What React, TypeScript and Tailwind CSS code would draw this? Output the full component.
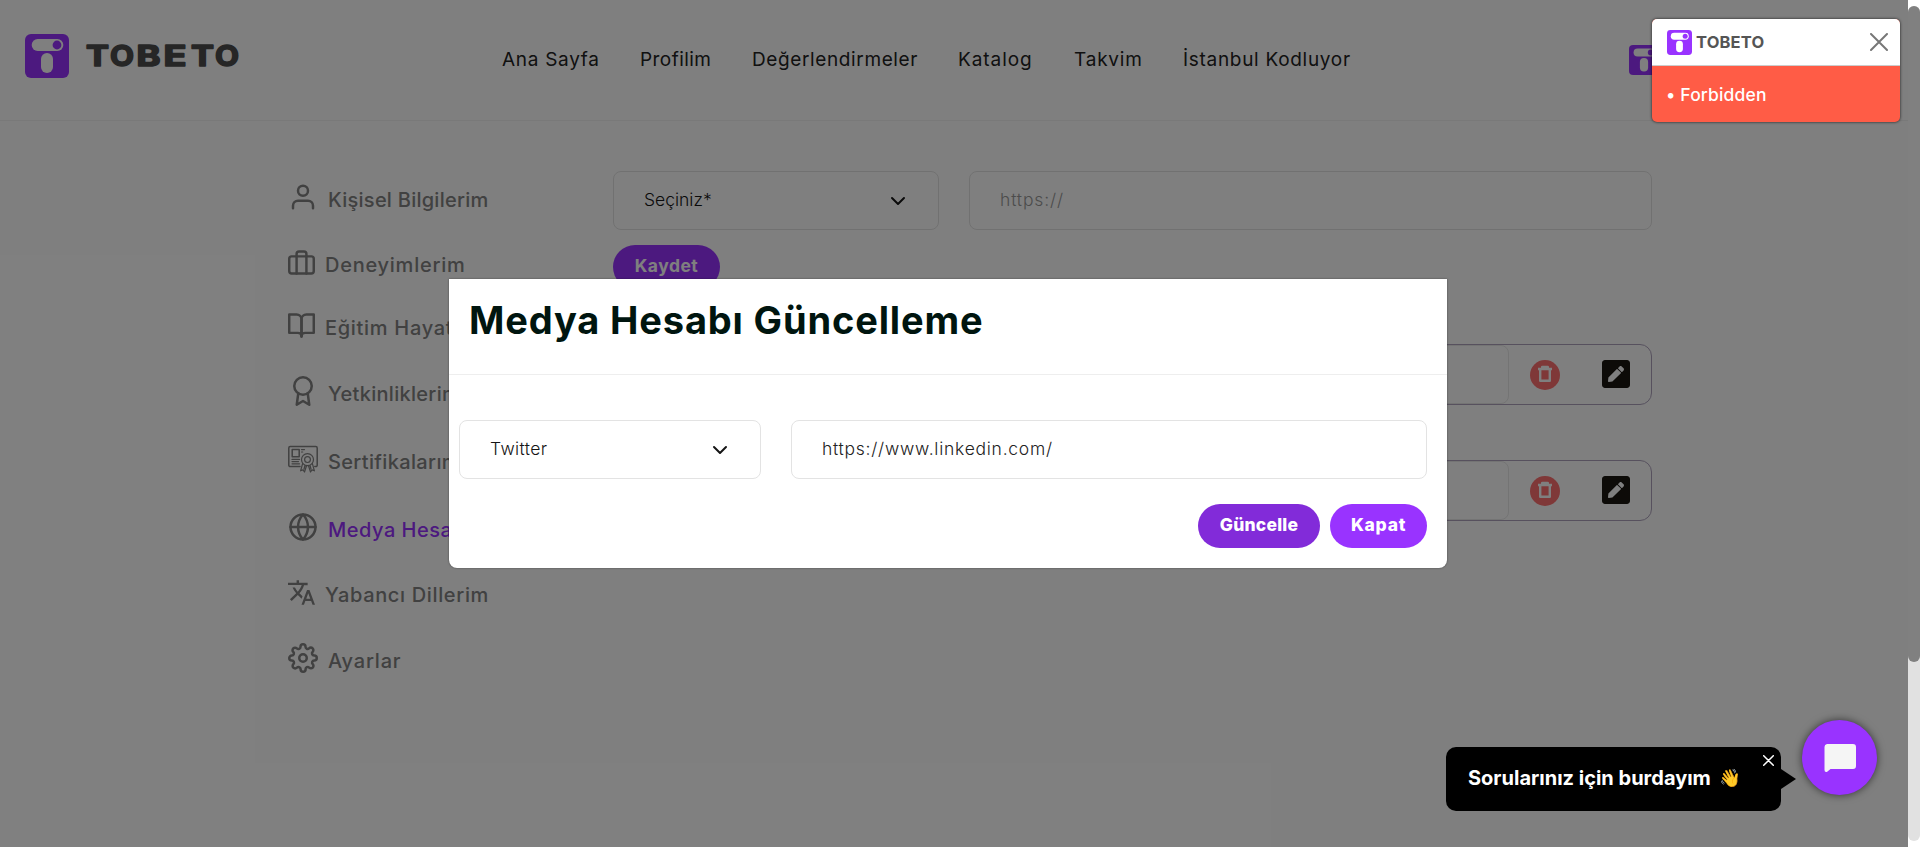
import React from "react";
import { FaPenSquare } from "react-icons/fa";

function Mark({ className }: { className: string }) {
  return (
    <svg viewBox="0 0 44 44" className={className}>
      <rect width="44" height="44" rx="6" fill="#9933ff" />
      <rect x="6.7" y="5" width="31.6" height="12" rx="6" fill="#fff" />
      <circle cx="32" cy="11" r="4.4" fill="#9933ff" />
      <rect x="16" y="19" width="12" height="20" rx="6" fill="#fff" />
    </svg>
  );
}

const wordmark = [
  { ch: "T", x: 0, w: 23 },
  { ch: "O", x: 24, w: 24 },
  { ch: "B", x: 50.5, w: 24 },
  { ch: "E", x: 77.5, w: 23 },
  { ch: "T", x: 105, w: 23 },
  { ch: "O", x: 129, w: 24 },
];

function Wordmark() {
  return (
    <svg viewBox="0 0 160 40" className="h-10 w-40 overflow-visible">
      <g
        fontFamily="Inter, sans-serif"
        fontSize="28"
        fontWeight="700"
        fill="#4d4d4d"
        stroke="#4d4d4d"
        strokeWidth="1.6"
        strokeLinejoin="round"
      >
        {wordmark.map((l) => (
          <text key={l.x} x={l.x} y="30.2" textLength={l.w} lengthAdjust="spacingAndGlyphs">
            {l.ch}
          </text>
        ))}
      </g>
    </svg>
  );
}

const stroke = {
  fill: "none",
  stroke: "currentColor",
  strokeWidth: 2,
  strokeLinecap: "round" as const,
  strokeLinejoin: "round" as const,
};

const UserIcon = () => (
  <svg viewBox="0 0 24 24" className="h-[30px] w-[30px]" {...stroke}>
    <path d="M20 21v-2a4 4 0 0 0-4-4H8a4 4 0 0 0-4 4v2" />
    <circle cx="12" cy="7" r="4" />
  </svg>
);
const BriefcaseIcon = () => (
  <svg viewBox="1 2 22 20" className="h-[25px] w-[27px]" {...stroke}>
    <rect x="2" y="7" width="20" height="14" rx="2" />
    <path d="M16 21V5a2 2 0 0 0-2-2h-4a2 2 0 0 0-2 2v16" />
  </svg>
);
const BookIcon = () => (
  <svg viewBox="1 2 22 20" className="h-[25px] w-[27px]" {...stroke}>
    <path d="M2 3h6a4 4 0 0 1 4 4v14a3 3 0 0 0-3-3H2z" />
    <path d="M22 3h-6a4 4 0 0 0-4 4v14a3 3 0 0 1 3-3h7z" />
  </svg>
);
const AwardIcon = () => (
  <svg viewBox="0 0 24 24" className="h-[30px] w-[30px]" {...stroke}>
    <circle cx="12" cy="8" r="7" />
    <path d="M8.21 13.89 7 23l5-3 5 3-1.21-9.12" />
  </svg>
);
const CertificateIcon = () => (
  <svg viewBox="0 0 30 30" className="h-[30px] w-[30px]" {...stroke} strokeWidth={1.2}>
    <path d="M12 22.6H2.2A1.4 1.4 0 0 1 .8 21.2V4a1.4 1.4 0 0 1 1.4-1.4h25.6A1.4 1.4 0 0 1 29.2 4v17.2a1.4 1.4 0 0 1-1.4 1.4h-1" strokeWidth="1.5" />
    <rect x="4.2" y="5.6" width="7" height="7.2" strokeWidth="1.5" />
    <path d="M4 15.4h7.5M4 17.6h6.5M4 19.8h7.5M13.5 5.6h3M13.5 8h1.2" />
    <circle cx="19.5" cy="15.6" r="6" />
    <circle cx="19.5" cy="15.6" r="2.9" />
    <path d="M14.6 19.6l-2 7.2 2.4-.9 1.5 2.1 2-6.2M24.4 19.6l2 7.2-2.4-.9-1.5 2.1-2-6.2M17 21.5l-1 3.5M22 21.5l1 3.5" />
  </svg>
);
const GlobeIcon = () => (
  <svg viewBox="0 0 24 24" className="h-[30px] w-[30px]" {...stroke}>
    <circle cx="12" cy="12" r="10" />
    <path d="M2 12h20M12 2a15.3 15.3 0 0 1 4 10 15.3 15.3 0 0 1-4 10 15.3 15.3 0 0 1-4-10 15.3 15.3 0 0 1 4-10z" />
  </svg>
);
const TranslateIcon = () => (
  <svg viewBox="1 2 22 20" className="h-[25px] w-[27px]" fill="currentColor">
    <path d="M12.87 15.07l-2.54-2.51.03-.03c1.74-1.94 2.98-4.17 3.71-6.53H17V4h-7V2H8v2H1v1.99h11.17C11.5 7.92 10.44 9.75 9 11.35 8.07 10.32 7.3 9.19 6.69 8h-2c.73 1.63 1.73 3.17 2.98 4.56l-5.09 5.02L4 19l5-5 3.11 3.11.76-2.04zM18.5 10h-2L12 22h2l1.12-3h4.75L21 22h2l-4.5-12zm-2.62 7l1.62-4.33L19.12 17h-3.24z" />
  </svg>
);
const GearIcon = () => (
  <svg viewBox="0 0 24 24" className="h-[30px] w-[30px]" {...stroke}>
    <circle cx="12" cy="12" r="3" />
    <path d="M19.4 15a1.65 1.65 0 0 0 .33 1.82l.06.06a2 2 0 0 1 0 2.83 2 2 0 0 1-2.83 0l-.06-.06a1.65 1.65 0 0 0-1.82-.33 1.65 1.65 0 0 0-1 1.51V21a2 2 0 0 1-2 2 2 2 0 0 1-2-2v-.09A1.65 1.65 0 0 0 9 19.4a1.65 1.65 0 0 0-1.82.33l-.06.06a2 2 0 0 1-2.83 0 2 2 0 0 1 0-2.83l.06-.06a1.65 1.65 0 0 0 .33-1.82 1.65 1.65 0 0 0-1.51-1H3a2 2 0 0 1-2-2 2 2 0 0 1 2-2h.09A1.65 1.65 0 0 0 4.6 9a1.65 1.65 0 0 0-.33-1.82l-.06-.06a2 2 0 0 1 0-2.83 2 2 0 0 1 2.83 0l.06.06a1.65 1.65 0 0 0 1.82.33H9a1.65 1.65 0 0 0 1-1.51V3a2 2 0 0 1 2-2 2 2 0 0 1 2 2v.09a1.65 1.65 0 0 0 1 1.51 1.65 1.65 0 0 0 1.82-.33l.06-.06a2 2 0 0 1 2.83 0 2 2 0 0 1 0 2.83l-.06.06a1.65 1.65 0 0 0-.33 1.82V9a1.65 1.65 0 0 0 1.51 1H21a2 2 0 0 1 2 2 2 2 0 0 1-2 2h-.09a1.65 1.65 0 0 0-1.51 1z" />
  </svg>
);

const nav = [
  { label: "Ana Sayfa", cls: "w-[138px] tracking-[0.7px]" },
  { label: "Profilim", cls: "w-[112px] tracking-[0.45px]" },
  { label: "Değerlendirmeler", cls: "w-[206px] tracking-[0.62px]" },
  { label: "Katalog", cls: "w-[116px] tracking-[0.95px]" },
  { label: "Takvim", cls: "w-[109px] tracking-[0.8px]" },
  { label: "İstanbul Kodluyor", cls: "w-[180px] tracking-[0.7px]" },
];

const menu = [
  { label: "Kişisel Bilgilerim", Icon: UserIcon, cls: "tracking-[0.25px]" },
  { label: "Deneyimlerim", Icon: BriefcaseIcon, cls: "tracking-[0.75px]" },
  { label: "Eğitim Hayatım", Icon: BookIcon, cls: "tracking-[0.7px]" },
  { label: "Yetkinliklerim", Icon: AwardIcon, cls: "tracking-[0.3px]" },
  { label: "Sertifikalarım", Icon: CertificateIcon, cls: "tracking-[0.35px]" },
  { label: "Medya Hesaplarım", Icon: GlobeIcon, cls: "tracking-[0.5px] text-[#9933ff]" },
  { label: "Yabancı Dillerim", Icon: TranslateIcon, cls: "tracking-[0.65px]" },
  { label: "Ayarlar", Icon: GearIcon, cls: "tracking-[0.8px]" },
];

function Select({ label, className }: { label: string; className: string }) {
  return (
    <div className={`flex h-[59px] items-center justify-between rounded-lg border border-[#e3e3e3] pr-[32px] pl-[30px] text-[17.5px] font-light text-[#151515] ${className}`}>
      <span>{label}</span>
      <svg viewBox="0 0 16 16" className="h-4 w-4" {...stroke}>
        <path d="m2 5 6 6 6-6" />
      </svg>
    </div>
  );
}

function MediaRow() {
  return (
    <div className="flex h-[61px] items-center rounded-xl border border-[#aea3bd]">
      <div className="h-[59px] w-[895px] rounded-lg border border-[#e8e8e8]" />
      <div className="ml-[21px] flex h-[30px] w-[30px] items-center justify-center rounded-full bg-[#ff7070]">
        <svg viewBox="0 0 16 18" className="mb-[2px] h-[18px] w-4" fill="none" stroke="#fff" strokeWidth="2.4" strokeLinejoin="round">
          <path d="M1 4h14M5.2 3.6V2h5.6v1.6M3.2 4.4v11.4h9.6V4.4" />
        </svg>
      </div>
      <FaPenSquare className="mb-[2px] ml-[42px] h-8 w-7 text-[#1b1610]" />
    </div>
  );
}

export default function App() {
  return (
    <div className="flex h-[847px] w-full overflow-hidden bg-white font-['Inter',sans-serif]">
      <div className="relative h-full w-[1908px] shrink-0 overflow-hidden">
        <header className="flex h-[121px] items-center border-b border-[#f3f3f3]">
          <div className="flex w-[502px] items-center gap-[17px] pb-[9px] pl-[25px]">
            <Mark className="h-11 w-11" />
            <Wordmark />
          </div>
          <nav className="flex text-[19px] text-[#222]">
            {nav.map((n) => (
              <span key={n.label} className={`whitespace-nowrap ${n.cls}`}>{n.label}</span>
            ))}
          </nav>
          <Mark className="ml-[266px] h-[30px] w-[30px]" />
        </header>

        <main className="flex pl-[288px]">
          <aside className="mt-[61px] flex w-[325px] flex-col gap-[38px] text-[20px] font-medium text-[#828282]">
            {menu.map(({ label, Icon, cls }) => (
              <div key={label} className="flex items-center gap-[10px]">
                <Icon />
                <span className={`pt-[5px] leading-[20px] whitespace-nowrap ${cls}`}>{label}</span>
              </div>
            ))}
          </aside>
          <section className="mt-[50px] w-[1039px]">
            <div className="flex gap-[30px]">
              <Select label="Seçiniz*" className="w-[326px]" />
              <div className="flex h-[59px] flex-1 items-center rounded-lg border border-[#e3e3e3] pl-[30px] text-[17.5px] font-light tracking-[0.85px] text-[#999]">
                https://
              </div>
            </div>
            <div className="mt-[15px] flex h-11 w-[107px] items-center justify-center rounded-full bg-[#9933ff] pb-[1px] text-[17.5px] font-bold tracking-[0.5px] text-white">
              Kaydet
            </div>
            <div className="mt-[55px] flex flex-col gap-[55px]">
              <MediaRow />
              <MediaRow />
            </div>
          </section>
        </main>

        <div className="absolute inset-0 bg-black/50" />

        <div className="absolute top-[279px] left-[449px] flex h-[289px] w-[998px] flex-col rounded-b-lg bg-white shadow-[0_0_2px_rgba(0,0,0,0.5)]">
          <div className="flex h-[96px] items-start border-b border-[#eee] pt-[18px] pl-[20px]">
            <h1 className="text-[38px] leading-[46px] font-bold tracking-[0.85px] text-[#00150f]">Medya Hesabı Güncelleme</h1>
          </div>
          <div className="mt-[45px] flex gap-[30px] pr-5 pl-[10px]">
            <Select label="Twitter" className="w-[302px] tracking-[0.4px]" />
            <div className="flex h-[59px] flex-1 items-center rounded-lg border border-[#e3e3e3] pl-[30px] text-[17.5px] font-light tracking-[0.74px] text-[#222]">
              https://www.linkedin.com/
            </div>
          </div>
          <div className="mt-[25px] flex justify-end gap-[10px] pr-5 text-[17.5px] font-extrabold text-white">
            <div className="flex h-11 w-[122px] items-center justify-center rounded-full bg-[#822bd9] pb-[1px] tracking-[0.2px]">Güncelle</div>
            <div className="flex h-11 w-[97px] items-center justify-center rounded-full bg-[#9933ff] pb-[1px] tracking-[0.7px]">Kapat</div>
          </div>
        </div>

        <div className="absolute top-[19px] left-[1652px] h-[103px] w-[248px] overflow-hidden rounded-[5px] bg-[#ff5c46] shadow-[0_0_3px_rgba(0,0,0,0.8)]">
          <div className="flex h-[47px] items-center border-b border-[#ccc] bg-white pr-3 pl-[15px]">
            <Mark className="h-[25px] w-[25px]" />
            <span className="ml-[4px] flex-1 text-[16.5px] font-bold tracking-[0.15px] text-[#555]">TOBETO</span>
            <svg viewBox="0 0 18 18" className="h-[18px] w-[18px]" fill="none" stroke="#777" strokeWidth="2" strokeLinecap="round">
              <path d="M1 1l16 16M17 1L1 17" />
            </svg>
          </div>
          <div className="flex h-[56px] items-center pt-[2px] pl-[14px] text-[17.5px] font-medium tracking-[0.15px] text-white">• Forbidden</div>
        </div>

        <div className="absolute top-[720px] left-[1446px] flex h-[91px]">
          <div className="mt-[27px] flex h-16 w-[335px] items-center rounded-[10px] bg-black pb-[2px] pl-[22px] text-[20px] font-bold text-white">
            <span className="whitespace-nowrap">Sorularınız için burdayım</span>
            <span className="ml-[8px] text-[17.5px] font-normal">👋</span>
            <svg viewBox="0 0 11 11" className="mb-[36px] ml-[22px] h-[11px] w-[11px]" fill="none" stroke="#fff" strokeWidth="1.5" strokeLinecap="round">
              <path d="M.7.7l9.6 9.6M10.3.7.7 10.3" />
            </svg>
          </div>
          <svg viewBox="0 0 15 20" className="mt-[49px] h-5 w-[15px]">
            <path d="M0 0l15 10L0 20z" fill="#000" />
          </svg>
          <div className="ml-[6px] flex h-[75px] w-[75px] items-center justify-center rounded-full bg-[#9933ff] shadow-[0_0_8px_rgba(0,0,0,0.6)]">
            <svg viewBox="0 0 32 28" className="h-7 w-8">
              <path d="M3 0h26a3 3 0 0 1 3 3v19a3 3 0 0 1-3 3H6.5l-3.300 2.800Q.5 28.600.5 26V3A3 3 0 0 1 3 0z" fill="#f5f5f5" />
            </svg>
          </div>
        </div>
      </div>

      <div className="h-full w-3 shrink-0 bg-white pt-[6px]">
        <div className="h-[835px] w-3 rounded-full bg-[#e1e1e1]">
          <div className="h-[656px] w-3 rounded-full bg-[#808080]" />
        </div>
      </div>
    </div>
  );
}
